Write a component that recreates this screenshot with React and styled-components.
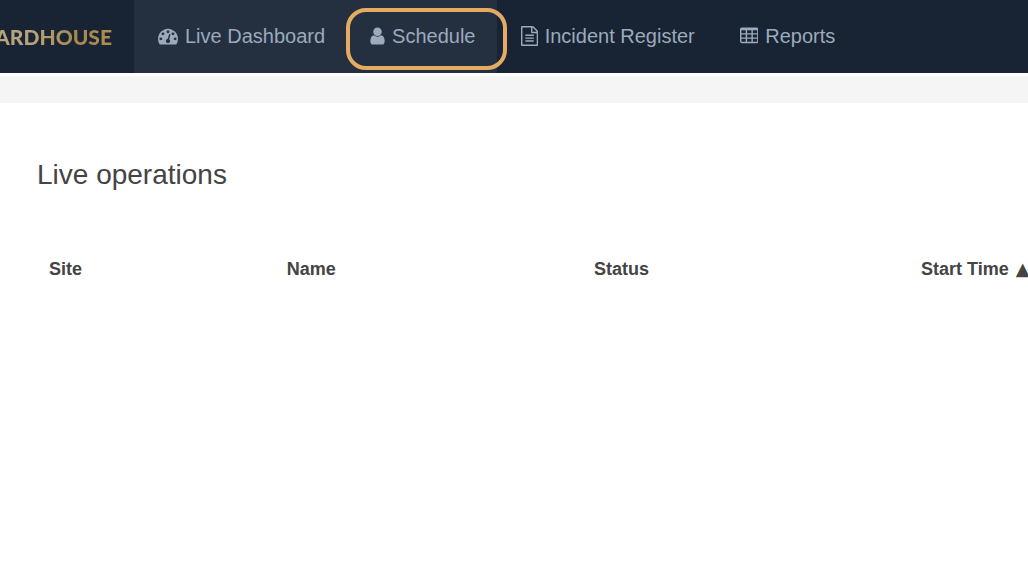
import React from 'react'
import styled, { createGlobalStyle } from 'styled-components'

const GlobalStyle = createGlobalStyle`
  body {
    margin: 0;
    background: #fff;
    color: #444;
    font-family: "Liberation Sans", Arial, sans-serif;
  }
`;

const Header = styled.header`
  display: flex;
  height: 73px;
  background: #182433;
`;

const Brand = styled.a`
  display: flex;
  flex: 0 0 112px;
  align-items: center;
  justify-content: flex-end;
  margin-right: 22px;
  overflow: hidden;
  font-family: Lato, "Open Sans", sans-serif;
  font-size: 21px;
  font-weight: 900;
  text-decoration: none;
`;

const BrandName = styled.span`
  background: linear-gradient(90deg, #b8a47c 45%, #a78850 75%, #b08d50);
  background-clip: text;
  color: transparent;
`;

const Nav = styled.nav`
  display: flex;
`;

const NavLink = styled.a`
  position: relative;
  display: flex;
  align-items: center;
  gap: 7px;
  padding: 0 21px 0 24px;
  background: ${props => (props.$active ? '#243040' : 'transparent')};
  color: #9caabd;
  font-size: 20px;
  text-decoration: none;
  white-space: nowrap;
`;

const Highlight = styled.span`
  position: absolute;
  z-index: 1;
  top: 8px;
  right: -10px;
  bottom: 3px;
  left: 0;
  border: 4px solid #e6ab62;
  border-radius: 20px;
  pointer-events: none;
`;

const Icon = styled.svg`
  flex: none;
  height: 20px;
  margin-bottom: 2px;
  fill: currentColor;
`;

const Strip = styled.div`
  height: 27px;
  margin-top: 3px;
  background: #f5f5f5;
`;

const Content = styled.main`
  padding: 56px 0 0 37px;
`;

const Title = styled.h1`
  margin: 0 0 60px;
  font-size: 28px;
  font-weight: 400;
  line-height: 32px;
`;

const Table = styled.table`
  width: 100%;
  border-collapse: collapse;
  table-layout: fixed;
`;

const HeadCell = styled.th`
  box-sizing: border-box;
  width: ${props => props.$width};
  padding: 8px 0 8px 12px;
  font-size: 18px;
  line-height: 20px;
  text-align: left;
  white-space: nowrap;
`;

const SortArrow = styled.span`
  margin-left: 7px;
  font-family: "DejaVu Sans", sans-serif;
`;

const icons = {
  dashboard: {
    box: '0 0 1792 1792',
    path: 'M384 1152q0-53-37.5-90.5t-90.5-37.5-90.5 37.5-37.5 90.5 37.5 90.5 90.5 37.5 90.5-37.5 37.5-90.5zm192-448q0-53-37.5-90.5t-90.5-37.5-90.5 37.5-37.5 90.5 37.5 90.5 90.5 37.5 90.5-37.5 37.5-90.5zm428 481l101-382q6-26-7.5-48.5t-38.5-29.5-48 6.5-30 39.5l-101 382q-60 5-107 43.5t-63 98.5q-20 77 20 146t117 89 146-20 89-117q16-60-6-117t-72-91zm660-33q0-53-37.5-90.5t-90.5-37.5-90.5 37.5-37.5 90.5 37.5 90.5 90.5 37.5 90.5-37.5 37.5-90.5zm-640-640q0-53-37.5-90.5t-90.5-37.5-90.5 37.5-37.5 90.5 37.5 90.5 90.5 37.5 90.5-37.5 37.5-90.5zm448 192q0-53-37.5-90.5t-90.5-37.5-90.5 37.5-37.5 90.5 37.5 90.5 90.5 37.5 90.5-37.5 37.5-90.5zm320 448q0 261-141 483-19 29-54 29h-1402q-35 0-54-29-141-221-141-483 0-182 71-348t191-286 286-191 348-71 348 71 286 191 191 286 71 348z',
  },
  user: {
    box: '224 0 1344 1792',
    path: 'M1536 1399q0 109-62.5 187t-150.5 78h-854q-88 0-150.5-78t-62.5-187q0-85 8.5-160.5t31.5-152 58.5-131 94-89 134.5-34.5q131 128 313 128t313-128q76 0 134.5 34.5t94 89 58.5 131 31.5 152 8.5 160.5zm-256-887q0 159-112.5 271.5t-271.5 112.5-271.5-112.5-112.5-271.5 112.5-271.5 271.5-112.5 271.5 112.5 112.5 271.5z',
  },
  file: {
    box: '128 0 1536 1792',
    path: 'M1596 380q28 28 48 76t20 88v1152q0 40-28 68t-68 28h-1344q-40 0-68-28t-28-68v-1600q0-40 28-68t68-28h896q40 0 88 20t76 48zm-444-244v376h376q-10-29-22-41l-313-313q-12-12-41-22zm384 1528v-1024h-416q-40 0-68-28t-28-68v-416h-768v1536h1280zm-1024-864q0-14 9-23t23-9h704q14 0 23 9t9 23v64q0 14-9 23t-23 9h-704q-14 0-23-9t-9-23v-64zm736 224q14 0 23 9t9 23v64q0 14-9 23t-23 9h-704q-14 0-23-9t-9-23v-64q0-14 9-23t23-9h704zm0 256q14 0 23 9t9 23v64q0 14-9 23t-23 9h-704q-14 0-23-9t-9-23v-64q0-14 9-23t23-9h704z',
  },
  table: {
    box: '64 0 1664 1792',
    path: 'M1728 288v1088q0 66-47 113t-113 47h-1344q-66 0-113-47t-47-113v-1088q0-66 47-113t113-47h1344q66 0 113 47t47 113zM192 384h384v256h-384zM704 384h384v256h-384zM1216 384h384v256h-384zM192 768h384v256h-384zM704 768h384v256h-384zM1216 768h384v256h-384zM192 1152h384v256h-384zM704 1152h384v256h-384zM1216 1152h384v256h-384z',
  },
};

const links = [
  { label: 'Live Dashboard', icon: 'dashboard', active: true },
  { label: 'Schedule', icon: 'user', active: true, highlighted: true },
  { label: 'Incident Register', icon: 'file' },
  { label: 'Reports', icon: 'table' },
];

const NavIcon = ({ name }) => (
  <Icon viewBox={icons[name].box} aria-hidden="true">
    <path fillRule="evenodd" d={icons[name].path} />
  </Icon>
);

const App = () => (
  <>
    <GlobalStyle />
    <Header>
      <Brand href="#"><BrandName>GUARDHOUSE</BrandName></Brand>
      <Nav>
        {links.map(link => (
          <NavLink key={link.label} href="#" $active={link.active}>
            <NavIcon name={link.icon} />
            {link.label}
            {link.highlighted && <Highlight />}
          </NavLink>
        ))}
      </Nav>
    </Header>
    <Strip />
    <Content>
      <Title>Live operations</Title>
      <Table>
        <thead>
          <tr>
            <HeadCell $width="24%">Site</HeadCell>
            <HeadCell $width="31%">Name</HeadCell>
            <HeadCell $width="33%">Status</HeadCell>
            <HeadCell>Start Time<SortArrow>▲</SortArrow></HeadCell>
          </tr>
        </thead>
      </Table>
    </Content>
  </>
);

export default App
